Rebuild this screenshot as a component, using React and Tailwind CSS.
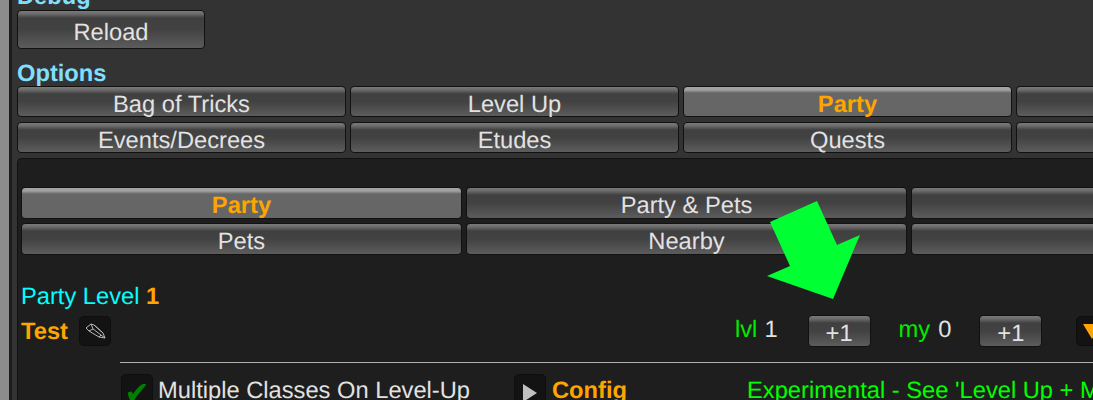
import React from 'react';

const btnBase = 'shrink-0 flex items-center justify-center rounded-[4px] border border-[#111] leading-none';
const btnNormal = 'bg-[linear-gradient(#7a7a7a_0,#6a6a6a_3px,#404040_7px,#424242_50%,#5c5c5c_100%)] text-[#e2e2e2]';
const btnActive = 'bg-[linear-gradient(#a5a5a5_0,#a0a0a0_3px,#666_6px,#666_100%)] text-[#ffa500] font-bold';

const Btn = ({ children, active, className }) => (
  <div className={`${btnBase} ${active ? btnActive : btnNormal} ${className}`}>{children}</div>
);

const IconBox = ({ children, className = '' }) => (
  <div className={`shrink-0 flex items-center justify-center rounded-[5px] bg-[#131313] border border-[#0e0e0e] ${className}`}>{children}</div>
);

const ButtonRow = ({ items, size, className = '' }) => (
  <div className={`flex gap-[4px] ${className}`}>
    {items.map((it) => (
      <Btn key={it.label + it.key} active={it.active} className={size}>{it.label}</Btn>
    ))}
  </div>
);

export default function App() {
  return (
    <div className="relative w-[1093px] h-[400px] overflow-hidden flex bg-[#333] font-['Liberation_Sans',Arial,sans-serif] text-[23.7px] text-[#e2e2e2] [text-rendering:geometricPrecision]">
      {/* window edge */}
      <div className="w-[9px] shrink-0 bg-[#8c8c8c]" />
      <div className="w-[3px] shrink-0 bg-[#1c1c1c]" />

      <div className="flex-1 min-w-0 pl-[5px] flex flex-col">
        <div className="h-[10px] relative">
          <div className="absolute left-0 top-[-20px] font-bold text-[#80dfff]">Debug</div>
        </div>
        <Btn className="w-[188px] h-[39px] pt-[8px]">Reload</Btn>

        <div className="mt-[12px] h-[26px] font-bold text-[#80dfff] leading-[26px]">Options</div>
        <ButtonRow
          className="mt-[-1px]"
          size="w-[329px] h-[31px] pt-[9px]"
          items={[
            { label: 'Bag of Tricks', key: 1 },
            { label: 'Level Up', key: 2 },
            { label: 'Party', key: 3, active: true },
            { label: '', key: 4 },
          ]}
        />
        <ButtonRow
          className="mt-[5px]"
          size="w-[329px] h-[31px] pt-[9px]"
          items={[
            { label: 'Events/Decrees', key: 1 },
            { label: 'Etudes', key: 2 },
            { label: 'Quests', key: 3 },
            { label: '', key: 4 },
          ]}
        />

        {/* party panel */}
        <div className="mt-[5px] flex-1 rounded-tl-[5px] border-t border-l border-[#111] bg-[#1e1e1e] pl-[3px] pt-[28px] overflow-hidden">
          <ButtonRow
            size="w-[441px] h-[32px] pt-[7px]"
            items={[
              { label: 'Party', key: 1, active: true },
              { label: 'Party & Pets', key: 2 },
              { label: '', key: 3 },
            ]}
          />
          <ButtonRow
            className="mt-[4px]"
            size="w-[441px] h-[32px] pt-[7px]"
            items={[
              { label: 'Pets', key: 1 },
              { label: 'Nearby', key: 2 },
              { label: 'Friends', key: 3 },
            ]}
          />

          <div className="mt-[29px] h-[26px] leading-[26px] text-[#00ffff]">
            Party Level <span className="font-bold text-[#ffa500]">1</span>
          </div>

          <div className="mt-[5px] h-[32px] flex items-center">
            <span className="w-[58px] shrink-0 font-bold text-[#ffa500] pt-[4px]">Test</span>
            <IconBox className="w-[32px] h-[30px]">
              <svg width="22" height="18" viewBox="0 0 22 18" fill="none" stroke="#b8b8b8" strokeWidth="1">
                <path d="M2 6 L7 2 L10 3 L19 11 L21 16 L15 15 L5 9 Z" />
                <path d="M2 6 L5 9 M7 2 L9 7 L5 9 M9 7 L17 13 L15 15 M10 3 L19 11 M17 13 L21 16" />
              </svg>
            </IconBox>
            <div className="ml-[624px] flex items-center shrink-0">
              <span className="text-[#00ee00]">lvl</span>
              <span className="ml-[7px]">1</span>
              <Btn className="ml-[30px] w-[63px] h-[32px] pt-[7px]">+1</Btn>
              <span className="ml-[28px] text-[#00ee00]">my</span>
              <span className="ml-[8px]">0</span>
              <Btn className="ml-[28px] w-[63px] h-[32px] pt-[7px]">+1</Btn>
              <IconBox className="ml-[34px] w-[32px] h-[30px]">
                <div className="w-0 h-0 border-l-[9px] border-r-[9px] border-t-[15px] border-l-transparent border-r-transparent border-t-[#ffa500]" />
              </IconBox>
            </div>
          </div>

          <div className="mt-[15px] ml-[99px] h-px w-[1000px] bg-[#b0b0b0]" />

          <div className="mt-[11px] ml-[100px] h-[32px] flex items-start whitespace-nowrap">
            <IconBox className="w-[32px] h-[32px] pt-[8px]">
              <span className="text-[30px] leading-none text-[#008000]">✔</span>
            </IconBox>
            <span className="ml-[5px] w-[356px] shrink-0">Multiple Classes On Level-Up</span>
            <IconBox className="w-[32px] h-[32px] pt-[6px]">
              <div className="w-0 h-0 border-t-[9px] border-b-[9px] border-l-[14px] border-t-transparent border-b-transparent border-l-[#c0c0c0]" />
            </IconBox>
            <span className="ml-[6px] w-[195px] shrink-0 font-bold text-[#ffa500]">Config</span>
            <span className="text-[#00ff00]">Experimental - See 'Level Up + Multiclass'</span>
          </div>
        </div>
      </div>

      {/* green arrow annotation over the page */}
      <svg className="absolute left-[760px] top-[195px]" width="110" height="110" viewBox="0 0 110 110">
        <path d="M10 27 L57 6 L77 50 L100 40 L73 104 L7 81 L30 71 Z" fill="#00ff33" />
      </svg>
    </div>
  );
}
